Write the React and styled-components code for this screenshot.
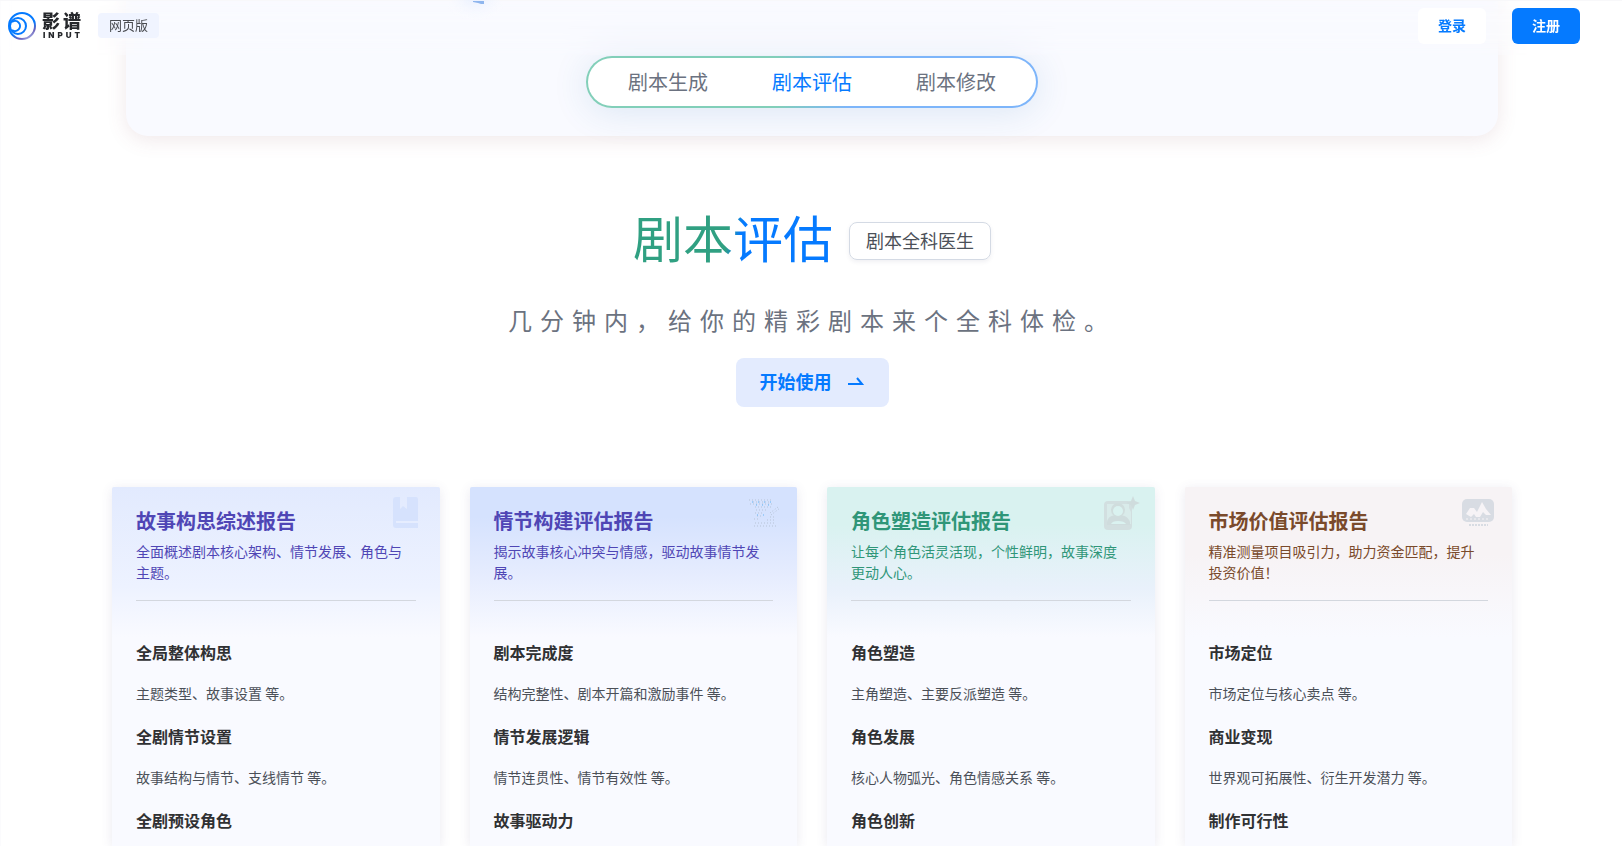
import React from 'react'
import styled, { createGlobalStyle } from 'styled-components';

const GlobalStyle = createGlobalStyle`
  * {
    box-sizing: border-box;
  }

  body {
    margin: 0;
    background: #fff;
    color: #303133;
    font-family: "Noto Sans CJK SC", "Noto Sans", sans-serif;
  }

  h1, h2, h3, p {
    margin: 0;
  }

  button {
    border: 0;
    padding: 0;
    font-family: inherit;
    cursor: pointer;
  }
`;

const Page = styled.div`
  display: flex;
  flex-direction: column;
  min-height: 100vh;
  padding-left: 1px;
  border-left: 1px solid #fbfbfd;
`;

const Header = styled.header`
  position: fixed;
  top: 0;
  left: 0;
  z-index: 10;
  display: flex;
  justify-content: space-between;
  align-items: flex-start;
  padding: 7px 42px 0 8px;
  width: 100%;
  height: 55px;
  border-top: 1px solid #f8f8fa;
  background: rgba(255, 255, 255, 0.1);
  backdrop-filter: blur(12px);
`;

const Spark = styled.svg`
  position: absolute;
  top: -1px;
  left: calc(50% - 371px);
`;

const Brand = styled.div`
  display: flex;
  align-items: center;
  height: 35px;
`;

const Logo = styled.a`
  display: flex;
  align-items: center;
  gap: 6px;
  color: #26282c;
  text-decoration: none;
`;

const LogoText = styled.span`
  display: flex;
  flex-direction: column;
  gap: 1px;
  width: 41px;
`;

const LogoName = styled.span`
  font-size: 18px;
  font-weight: 900;
  letter-spacing: 3px;
  line-height: 18px;
  white-space: nowrap;
`;

const LogoSub = styled.span`
  padding-left: 1px;
  font-family: Inter, sans-serif;
  font-size: 8px;
  font-weight: 900;
  letter-spacing: 3px;
  line-height: 10px;
  white-space: nowrap;
`;

const Version = styled.span`
  margin-left: 15px;
  padding: 0 11px 1px;
  border-radius: 4px;
  background: #f0f4ff;
  color: #494b50;
  font-size: 13px;
  line-height: 24px;
`;

const Account = styled.div`
  display: flex;
  gap: 26px;
`;

const AccountButton = styled.button`
  width: 68px;
  height: 36px;
  padding-bottom: 2px;
  border-radius: 6px;
  background: ${({ $primary }) => ($primary ? '#057aff' : '#fff')};
  color: ${({ $primary }) => ($primary ? '#fff' : '#057aff')};
  font-size: 14px;
  font-weight: 700;
`;

const Panel = styled.section`
  display: flex;
  justify-content: center;
  width: calc(100% - 248px);
  max-width: 1372px;
  margin: 0 auto;
  padding: 56px 0 28px;
  border-radius: 0 0 22px 22px;
  background: #f9faff;
  box-shadow: 0 4px 20px rgba(140, 80, 90, 0.13);
`;

const Tabs = styled.nav`
  display: flex;
  align-items: center;
  gap: 64px;
  height: 52px;
  padding: 0 40px;
  border: 2px solid transparent;
  border-radius: 26px;
  background:
    linear-gradient(#fff, #fff) padding-box,
    linear-gradient(90deg, #82cfb9 42%, #7db5fa 58%) border-box;
  box-shadow: 0 4px 36px rgba(40, 110, 180, 0.14);
`;

const Tab = styled.a`
  color: ${({ $active }) => ($active ? '#057aff' : '#6b7280')};
  font-size: 20px;
  line-height: 28px;
  text-decoration: none;
`;

const Hero = styled.section`
  display: flex;
  flex-direction: column;
  align-items: center;
  padding: 69px 0 80px;
`;

const TitleRow = styled.div`
  display: flex;
  align-items: center;
  gap: 16px;
`;

const Title = styled.h1`
  padding-bottom: 10px;
  background: linear-gradient(100deg, #30a082 47%, #057aff 53%);
  background-clip: text;
  color: transparent;
  font-size: 50px;
  font-weight: 400;
  line-height: 62px;
`;

const Badge = styled.span`
  padding: 0 16px 2px;
  border: 1px solid #d4dae4;
  border-radius: 8px;
  box-shadow: 0 2px 4px rgba(60, 70, 100, 0.08);
  color: #4b5058;
  font-size: 18px;
  line-height: 34px;
`;

const Slogan = styled.p`
  margin-top: 25px;
  color: #6b7280;
  font-size: 24px;
  letter-spacing: 8px;
  line-height: 36px;
`;

const StartButton = styled.button`
  display: flex;
  align-items: center;
  gap: 15px;
  height: 49px;
  margin-top: 20px;
  padding: 0 24px 3px;
  border-radius: 8px;
  background: #e3ebfe;
  color: #057aff;
  font-size: 18px;
  font-weight: 700;
`;

const Cards = styled.main`
  display: grid;
  flex: 1;
  grid-template-columns: repeat(4, 1fr);
  gap: 30px;
  width: calc(100% - 220px);
  max-width: 1400px;
  margin: 0 auto;
`;

const Card = styled.article`
  position: relative;
  padding: 19px 24px 10px;
  border-radius: 2px 2px 0 0;
  background: linear-gradient(${({ $tint }) => $tint}) no-repeat #f9faff;
  background-size: 100% 150px;
  box-shadow: 0 2px 12px rgba(80, 70, 130, 0.12);
`;

const CardHead = styled.header`
  height: 95px;
  border-bottom: 1px solid #d3d7de;
  color: ${({ $color }) => $color};
`;

const CardTitle = styled.h2`
  font-size: 20px;
  font-weight: 700;
  line-height: 30px;
`;

const CardText = styled.p`
  margin-top: 5px;
  font-size: 14px;
  line-height: 21px;
`;

const CardIcon = styled.svg`
  position: absolute;
  top: 8px;
  right: 12px;
`;

const Items = styled.div`
  padding-top: 39px;
`;

const ItemTitle = styled.h3`
  color: #303133;
  font-size: 16px;
  font-weight: 700;
  line-height: 24px;
`;

const ItemText = styled.p`
  margin: 19px 0 20px;
  color: #4b5058;
  font-size: 14px;
  line-height: 21px;
`;

const LogoMark = () => (
  <svg width="28" height="28" viewBox="0 0 28 28" fill="none" aria-hidden="true">
    <defs>
      <linearGradient id="ring" x1="6" y1="4" x2="20" y2="28" gradientUnits="userSpaceOnUse">
        <stop offset="0.55" stopColor="#057aff" />
        <stop offset="0.8" stopColor="#6a5fb8" />
        <stop offset="1" stopColor="#a9b4ea" />
      </linearGradient>
    </defs>
    <circle cx="14" cy="14" r="13" stroke="url(#ring)" strokeWidth="2" />
    <circle cx="10" cy="14" r="8" stroke="#057aff" strokeWidth="2" />
    <path d="M4 10a5 5 0 1 1 0 8" stroke="#057aff" strokeWidth="2" />
  </svg>
);

const icons = {
  book: (
    <path fill="#d6e2fd" d="M8 2h4v12l3-3 4 3V2h9a2 2 0 0 1 2 2v22H8v2h22v5H8a3 3 0 0 1-3-3V5a3 3 0 0 1 3-3z" />
  ),
  plot: (
    <g strokeWidth="1" fill="none">
      <path d="M4 5h24M8 7h18M5 9h22M10 12h16M11 15h12M10 18h8M12 21h6M9 24h5M25 22h5M22 25h7M10 28h20M9 31h22M25 18l8-6M26 20l9-7" stroke="#b7c3d6" strokeDasharray="1 2" />
      <path d="M7 7h20M11 10h14M12 20h8" stroke="#63b5f7" strokeDasharray="1 5" />
    </g>
  ),
  role: (
    <g>
      <rect x="1" y="6" width="28" height="29" rx="4" fill="#d2dfe0" />
      <path d="M4 9h22v4l2 4v12H4z" fill="#d9ebea" />
      <path d="M4 27c1-5 4-6 8-7h6c4 1 7 2 9 7v3H4z" fill="#cfdcdd" />
      <circle cx="15" cy="15" r="7" fill="#d0dddd" />
      <circle cx="15" cy="16" r="5" fill="#daf2f0" />
      <path d="M8 29c1-2 3-3 7-3s7 1 8 3z" fill="#daf2f0" />
      <path d="M30 1l2 5 5 2-5 2-2 5-2-5-5-2 5-2z" fill="#cfdcdd" />
    </g>
  ),
  market: (
    <g>
      <rect x="2" y="4" width="32" height="23" rx="5" fill="#d8dce3" />
      <path d="M6 19l4-6h4l3 4 5-10 4 7 5 6h-5l-3-3-3 5h-4l-2-3-3 3z" fill="#f6f3f6" />
      <path d="M6 24h24" stroke="#f6f3f6" strokeDasharray="2 2" />
      <path d="M9 30h19" stroke="#d8dce3" strokeWidth="2" strokeDasharray="2 1" />
    </g>
  ),
};

const reports = [
  {
    title: '故事构思综述报告',
    text: '全面概述剧本核心架构、情节发展、角色与主题。',
    color: '#4f46b5',
    tint: '#e2eafe, #edf2ff 66%, #f9faff',
    icon: 'book',
    items: [
      ['全局整体构思', '主题类型、故事设置 等。'],
      ['全剧情节设置', '故事结构与情节、支线情节 等。'],
      ['全剧预设角色'],
    ],
  },
  {
    title: '情节构建评估报告',
    text: '揭示故事核心冲突与情感，驱动故事情节发展。',
    color: '#4f46b5',
    tint: '#d5e2fe 20%, #e4ebfe 55%, #f9faff',
    icon: 'plot',
    items: [
      ['剧本完成度', '结构完整性、剧本开篇和激励事件 等。'],
      ['情节发展逻辑', '情节连贯性、情节有效性 等。'],
      ['故事驱动力'],
    ],
  },
  {
    title: '角色塑造评估报告',
    text: '让每个角色活灵活现，个性鲜明，故事深度更动人心。',
    color: '#2f9678',
    tint: '#d9f2f0 25%, #e9f1fb 68%, #f9faff',
    icon: 'role',
    items: [
      ['角色塑造', '主角塑造、主要反派塑造 等。'],
      ['角色发展', '核心人物弧光、角色情感关系 等。'],
      ['角色创新'],
    ],
  },
  {
    title: '市场价值评估报告',
    text: '精准测量项目吸引力，助力资金匹配，提升投资价值！',
    color: '#7a4a2b',
    tint: '#f7f3f5 45%, #f9faff',
    icon: 'market',
    items: [
      ['市场定位', '市场定位与核心卖点 等。'],
      ['商业变现', '世界观可拓展性、衍生开发潜力 等。'],
      ['制作可行性'],
    ],
  },
];

const App = () => {
  return (
    <>
      <GlobalStyle />
      <Header>
        <Spark width="68" height="40" viewBox="0 0 68 40" aria-hidden="true">
          <defs>
            <radialGradient id="halo" cx="0.5" cy="0.1" r="0.5">
              <stop offset="0" stopColor="#e6eeff" />
              <stop offset="1" stopColor="#f9faff" stopOpacity="0" />
            </radialGradient>
          </defs>
          <ellipse cx="36" cy="16" rx="32" ry="24" fill="url(#halo)" />
          <path d="M33 1h11v3h-3l-3-1-5-1z" fill="#8fb6ee" />
        </Spark>
        <Brand>
          <Logo href="#">
            <LogoMark />
            <LogoText>
              <LogoName>影谱</LogoName>
              <LogoSub>INPUT</LogoSub>
            </LogoText>
          </Logo>
          <Version>网页版</Version>
        </Brand>
        <Account>
          <AccountButton type="button">登录</AccountButton>
          <AccountButton type="button" $primary>注册</AccountButton>
        </Account>
      </Header>

      <Page>
        <Panel>
          <Tabs>
            <Tab href="#generate">剧本生成</Tab>
            <Tab href="#evaluate" $active>剧本评估</Tab>
            <Tab href="#modify">剧本修改</Tab>
          </Tabs>
        </Panel>

        <Hero>
          <TitleRow>
            <Title>剧本评估</Title>
            <Badge>剧本全科医生</Badge>
          </TitleRow>
          <Slogan>几分钟内，给你的精彩剧本来个全科体检。</Slogan>
          <StartButton type="button">
            开始使用
            <svg width="18" height="18" viewBox="0 0 18 18" fill="none" aria-hidden="true">
              <path d="M1 12h14L10 6" stroke="currentColor" strokeWidth="2" />
            </svg>
          </StartButton>
        </Hero>

        <Cards>
          {reports.map((report) => (
            <Card key={report.title} $tint={report.tint}>
              <CardIcon width="40" height="38" viewBox="0 0 40 38" aria-hidden="true">
                {icons[report.icon]}
              </CardIcon>
              <CardHead $color={report.color}>
                <CardTitle>{report.title}</CardTitle>
                <CardText>{report.text}</CardText>
              </CardHead>
              <Items>
                {report.items.map(([title, text]) => (
                  <React.Fragment key={title}>
                    <ItemTitle>{title}</ItemTitle>
                    {text && <ItemText>{text}</ItemText>}
                  </React.Fragment>
                ))}
              </Items>
            </Card>
          ))}
        </Cards>
      </Page>
    </>
  )
}

export default App
